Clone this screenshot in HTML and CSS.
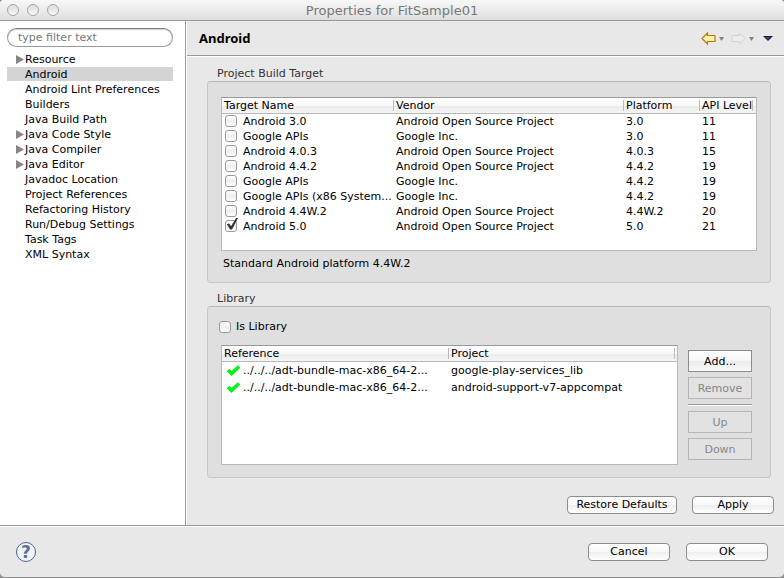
FILE: index.html
```html
<!DOCTYPE html>
<html lang="en">
<head>
  <meta charset="UTF-8">
  <title>Properties for FitSample01</title>
  <meta name="viewport" content="width=device-width, initial-scale=1">
  <link rel="stylesheet" href="styles.css">
</head>
<body>

<div class="window">
  <header class="titlebar">
    <div class="lights"><i></i><i></i><i></i></div>
    <h1>Properties for FitSample01</h1>
  </header>

  <div class="panes">
    <nav class="sidebar" aria-label="Property pages">
      <input type="text" class="filter" placeholder="type filter text" aria-label="Filter">
      <ul class="tree">
        <li class="parent"><a href="#">Resource</a></li>
        <li class="selected"><a href="#" aria-current="page">Android</a></li>
        <li><a href="#">Android Lint Preferences</a></li>
        <li><a href="#">Builders</a></li>
        <li><a href="#">Java Build Path</a></li>
        <li class="parent"><a href="#">Java Code Style</a></li>
        <li class="parent"><a href="#">Java Compiler</a></li>
        <li class="parent"><a href="#">Java Editor</a></li>
        <li><a href="#">Javadoc Location</a></li>
        <li><a href="#">Project References</a></li>
        <li><a href="#">Refactoring History</a></li>
        <li><a href="#">Run/Debug Settings</a></li>
        <li><a href="#">Task Tags</a></li>
        <li><a href="#">XML Syntax</a></li>
      </ul>
    </nav>

    <main class="page">
      <div class="page-head">
        <h2>Android</h2>
        <div class="history">
          <button type="button" aria-label="Back">
            <svg width="15" height="13" viewBox="0 0 15 13"><path d="M1 6.500 6.500 1v2.500h7.500v6H6.500V12z" fill="#fdf0a8" stroke="#b87a0c" stroke-width="1.200"/></svg>
          </button>
          <button type="button" aria-label="Back history">
            <svg width="5" height="5" viewBox="0 0 5 5"><path d="M0 1h5L2.500 5z" fill="#808080"/></svg>
          </button>
          <button type="button" class="forward" aria-label="Forward" disabled>
            <svg width="15" height="13" viewBox="0 0 15 13"><path d="M14 6.500 8.500 1v2.500H1v6h7.500V12z" fill="#ececea" stroke="#d2d2d0"/></svg>
          </button>
          <button type="button" aria-label="Forward history">
            <svg width="5" height="5" viewBox="0 0 5 5"><path d="M0 1h5L2.500 5z" fill="#808080"/></svg>
          </button>
          <button type="button" class="view-menu" aria-label="Menu">
            <svg width="10" height="5" viewBox="0 0 10 5"><path d="M0 0h10L5 5z" fill="#1c1430"/><path d="M2 1h5L5 4z" fill="#57369a"/></svg>
          </button>
        </div>
      </div>

      <div class="page-body">
        <fieldset class="group">
          <legend>Project Build Target</legend>
          <div class="box">
            <div class="list targets">
              <table>
                <colgroup><col class="col-name"><col><col class="col-platform"><col class="col-api"><col class="col-rest"></colgroup>
                <thead>
                  <tr><th>Target Name</th><th>Vendor</th><th>Platform</th><th>API Level</th><td></td></tr>
                </thead>
                <tbody>
                  <tr><td><label><input type="checkbox"> Android 3.0</label></td><td>Android Open Source Project</td><td>3.0</td><td>11</td><td></td></tr>
                  <tr><td><label><input type="checkbox"> Google APIs</label></td><td>Google Inc.</td><td>3.0</td><td>11</td><td></td></tr>
                  <tr><td><label><input type="checkbox"> Android 4.0.3</label></td><td>Android Open Source Project</td><td>4.0.3</td><td>15</td><td></td></tr>
                  <tr><td><label><input type="checkbox"> Android 4.4.2</label></td><td>Android Open Source Project</td><td>4.4.2</td><td>19</td><td></td></tr>
                  <tr><td><label><input type="checkbox"> Google APIs</label></td><td>Google Inc.</td><td>4.4.2</td><td>19</td><td></td></tr>
                  <tr><td><label><input type="checkbox"> Google APIs (x86 System...</label></td><td>Google Inc.</td><td>4.4.2</td><td>19</td><td></td></tr>
                  <tr><td><label><input type="checkbox"> Android 4.4W.2</label></td><td>Android Open Source Project</td><td>4.4W.2</td><td>20</td><td></td></tr>
                  <tr><td><label><input type="checkbox" checked> Android 5.0</label></td><td>Android Open Source Project</td><td>5.0</td><td>21</td><td></td></tr>
                </tbody>
              </table>
            </div>
            <p class="platform-note">Standard Android platform 4.4W.2</p>
          </div>
        </fieldset>

        <fieldset class="group">
          <legend>Library</legend>
          <div class="box box-library">
            <label class="is-library"><input type="checkbox"> Is Library</label>
            <div class="library">
              <div class="list references">
                <table>
                  <colgroup><col class="col-reference"><col><col class="col-edge"></colgroup>
                  <thead>
                    <tr><th>Reference</th><th>Project</th><td></td></tr>
                  </thead>
                  <tbody>
                    <tr>
                      <td><span class="ref"><svg width="13" height="11" viewBox="0 0 13 11"><path d="M1 5l3.500 3.500L12 1.500" fill="none" stroke="#00f514" stroke-width="3.600"/></svg>../../../adt-bundle-mac-x86_64-2...</span></td>
                      <td>google-play-services_lib</td><td></td>
                    </tr>
                    <tr>
                      <td><span class="ref"><svg width="13" height="11" viewBox="0 0 13 11"><path d="M1 5l3.500 3.500L12 1.500" fill="none" stroke="#00f514" stroke-width="3.600"/></svg>../../../adt-bundle-mac-x86_64-2...</span></td>
                      <td>android-support-v7-appcompat</td><td></td>
                    </tr>
                  </tbody>
                </table>
              </div>
              <div class="library-buttons">
                <button type="button" class="square">Add...</button>
                <button type="button" class="square" disabled>Remove</button>
                <hr>
                <button type="button" class="square" disabled>Up</button>
                <button type="button" class="square" disabled>Down</button>
              </div>
            </div>
          </div>
        </fieldset>
      </div>

      <div class="page-actions">
        <button type="button" class="push push-wide">Restore Defaults</button>
        <button type="button" class="push">Apply</button>
      </div>
    </main>
  </div>

  <footer class="footer">
    <button type="button" class="help" aria-label="Help">?</button>
    <div class="footer-actions">
      <button type="button" class="push">Cancel</button>
      <button type="button" class="push">OK</button>
    </div>
  </footer>
</div>

</body>
</html>
```
FILE: styles.css
```css
* {
  box-sizing: border-box;
}

body {
  margin: 0;
  background: #8c8c8c;
  color: #000;
  font: 11px/15px "Lucida Grande", "DejaVu Sans", sans-serif;
}

button,
input {
  font: inherit;
  color: inherit;
}

h1,
h2,
p,
ul {
  margin: 0;
  padding: 0;
}

.window {
  display: flex;
  flex-direction: column;
  min-height: 100vh;
  background: #e8e8e8;
  border-bottom: 1px solid #8c8c8c;
  border-radius: 4px 4px 5px 5px;
  overflow: hidden;
}

/* Title bar */

.titlebar {
  display: grid;
  grid-template-columns: 1fr auto 1fr;
  align-items: center;
  height: 21px;
  padding: 0 7px;
  background: linear-gradient(#f8f8f8, #dedede);
  border-bottom: 1px solid #999;
}

.titlebar h1 {
  color: #777;
  font-size: 13px;
  font-weight: normal;
}

.lights {
  display: flex;
  gap: 8px;
}

.lights i {
  width: 12px;
  height: 12px;
  border: 1px solid #a4a4a4;
  border-radius: 50%;
  background: linear-gradient(#dcdcdc, #f8f8f8);
}

/* Panes */

.panes {
  display: flex;
  flex: 1;
}

.sidebar {
  width: 187px;
  padding: 7px 13px 0 7px;
  background: #fff;
  border-right: 1px solid #fff;
  box-shadow: inset -1px 0 #999;
}

.filter {
  display: block;
  width: 100%;
  height: 19px;
  padding: 0 10px;
  border: 1px solid #999;
  border-top-color: #808080;
  border-radius: 10px;
  background: #fff;
  box-shadow: inset 0 1px 1px #ccc;
}

.filter::placeholder {
  color: #777;
}

.tree {
  margin-top: 5px;
  list-style: none;
}

.tree li {
  display: flex;
  align-items: center;
  height: 15px;
  padding-left: 18px;
}

.tree .parent {
  padding-left: 9px;
}

.tree .parent::before {
  content: "";
  width: 8px;
  height: 9px;
  margin-right: 1px;
  background: #868686;
  clip-path: polygon(0 0, 100% 50%, 0 100%);
}

.tree .selected {
  background: #d4d4d4;
  height: 14px;
  margin-bottom: 1px;
}

.tree a {
  color: inherit;
  text-decoration: none;
  white-space: nowrap;
}

.page {
  display: flex;
  flex: 1;
  flex-direction: column;
  min-width: 0;
}

.page-head {
  display: flex;
  align-items: center;
  justify-content: space-between;
  height: 35px;
  padding: 0 11px 0 12px;
  border-bottom: 1px solid #999;
  box-shadow: 0 1px #fff;
}

.page-head h2 {
  font: bold 13px/18px "Noto Sans", sans-serif;
}

.history {
  display: flex;
  align-items: center;
}

.history button {
  display: flex;
  padding: 0;
  border: 0;
  background: none;
}

.history button + button {
  margin-left: 3px;
}

.history .forward {
  margin-left: 7px;
}

.history .view-menu {
  margin-left: 9px;
}

.page-body {
  flex: 1;
  padding: 11px 13px 0 20px;
}

/* Groups */

.group {
  min-width: 0;
  margin: 0 0 9px;
  padding: 0;
  border: 0;
}

.group legend {
  padding: 0 10px;
  color: #333;
  line-height: 14px;
}

.box {
  padding: 15px 13px 11px;
  background: #dfdfdf;
  border: 1px solid #c6c6c6;
  border-top-color: #b8b8b8;
  border-radius: 4px;
}

.box-library {
  padding: 12px 18px 12px 13px;
}

.platform-note {
  margin-top: 5px;
  padding-left: 2px;
}

/* Lists */

.list {
  background: #fff;
  border: 1px solid #b8b8b8;
  border-top-color: #999;
}

.targets {
  height: 154px;
}

.references {
  flex: 1;
  min-width: 0;
  height: 120px;
}

table {
  width: 100%;
  table-layout: fixed;
  border-spacing: 0;
}

.col-name {
  width: 172px;
}

.col-platform {
  width: 76px;
}

.col-api {
  width: 53px;
}

.col-rest {
  width: 3px;
}

.col-reference {
  width: 227px;
}

.col-edge {
  width: 2px;
}

thead tr {
  background: linear-gradient(#fff 0%, #f8f8f8 50%, #ececec 50%, #f6f6f6 100%);
}

th,
td {
  height: 15px;
  padding: 0 0 0 2px;
  font-weight: normal;
  text-align: left;
  white-space: nowrap;
}

th,
thead td {
  height: 16px;
  border-bottom: 1px solid #b8b8b8;
}

th {
  background: linear-gradient(#bbb, #bbb) right center / 1px 11px no-repeat;
}

.references tbody td {
  height: 17px;
}

td label {
  display: flex;
  align-items: flex-start;
  gap: 6px;
  padding-left: 1px;
}

td label input {
  margin-top: 1px;
}

.ref {
  display: flex;
  align-items: center;
  gap: 3px;
  padding-left: 3px;
}

input[type=checkbox] {
  appearance: none;
  flex: none;
  width: 12px;
  height: 12px;
  margin: 0;
  border: 1px solid #999;
  border-radius: 3px;
  background: linear-gradient(#fff, #eee 50%, #fff);
}

td input[type=checkbox] {
  margin-top: 1px;
}

/* The tick reaches past the corner of its box */
input[type=checkbox]:checked {
  position: relative;
}

input[type=checkbox]:checked::after {
  content: "";
  position: absolute;
  left: 0;
  top: -3px;
  width: 12px;
  height: 12px;
  background: #333;
  clip-path: polygon(8% 52%, 26% 46%, 42% 68%, 84% 0, 100% 0, 50% 96%, 34% 96%);
}

/* Library */

.is-library {
  display: flex;
  align-items: center;
  gap: 5px;
  width: max-content;
  margin-left: -2px;
}

.library {
  display: flex;
  gap: 10px;
  margin-top: 11px;
}

.library-buttons {
  display: flex;
  flex-direction: column;
  gap: 5px;
  width: 64px;
  padding-top: 5px;
}

.library-buttons hr {
  width: 100%;
  height: 2px;
  margin: 0;
  border: 0;
  border-top: 1px solid #999;
  background: #fff;
}

.square {
  height: 22px;
  padding: 0;
  border: 1px solid #8c8c8c;
  background: linear-gradient(#fff, #f6f6f6 50%, #ececec 50%, #f8f8f8);
}

.square:disabled {
  border-color: #b4b4b4;
  background: #e2e2e2;
  color: #868686;
}

.push {
  width: 82px;
  height: 18px;
  padding: 0;
  border: 1px solid #8c8c8c;
  border-radius: 4px;
  background: linear-gradient(#fff, #f8f8f8 50%, #eee 50%, #fff);
  line-height: 16px;
}

.push-wide {
  width: 110px;
}

.page-actions {
  display: flex;
  justify-content: flex-end;
  gap: 15px;
  padding: 9px 10px 11px;
}

/* Footer */

.footer {
  display: flex;
  align-items: center;
  justify-content: space-between;
  height: 52px;
  padding: 0 16px;
  border-top: 1px solid #999;
  box-shadow: inset 0 1px #fff;
}

.footer-actions {
  display: flex;
  gap: 16px;
}

.help {
  width: 20px;
  height: 20px;
  padding: 0;
  border: 1px solid #4d648d;
  border-radius: 50%;
  background: #f2f4f6;
  color: #5a7099;
  font-size: 17px;
  font-weight: bold;
  line-height: 18px;
}
```
